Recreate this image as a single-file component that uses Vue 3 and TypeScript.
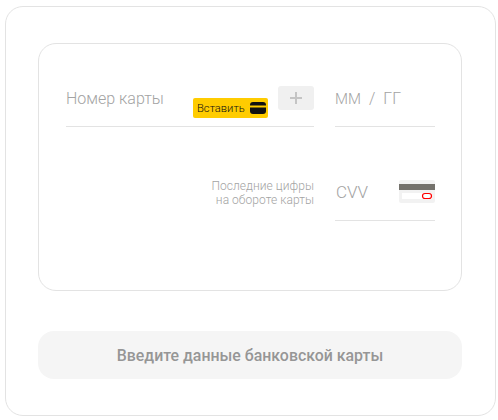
<template>
    <div class="wrapper">
        <div class="card-form">
            <div class="row">
                <div class="field number-field">
                    <span class="placeholder">Номер карты</span>
                    <button class="paste">
                        <span>Вставить</span>
                        <svg width="16" height="12" viewBox="0 0 16 12">
                            <rect x="0" y="0" width="16" height="12" rx="3" fill="#111" />
                            <rect x="0" y="3.5" width="16" height="2" fill="#ffcc00" />
                        </svg>
                    </button>
                    <div class="add">
                        <svg width="12" height="12" viewBox="0 0 12 12">
                            <path d="M6 0v12M0 6h12" stroke="#c4c4c4" stroke-width="2" fill="none" />
                        </svg>
                    </div>
                </div>
                <div class="field date-field">
                    <span class="placeholder month">ММ</span>
                    <span class="placeholder">/</span>
                    <span class="placeholder">ГГ</span>
                </div>
            </div>
            <div class="row second">
                <div class="hint">Последние цифры<br />на обороте карты</div>
                <div class="field cvv-field">
                    <span class="placeholder cvv">CVV</span>
                    <svg class="cvv-icon" width="36" height="23" viewBox="0 0 36 23">
                        <rect width="36" height="23" rx="2" fill="#f2f2f2" />
                        <rect y="4" width="36" height="6" fill="#74726c" />
                        <rect x="3" y="13" width="30" height="6" fill="#fff" />
                        <rect x="23.5" y="13.5" width="9" height="5" rx="2.5" fill="#fff" stroke="#f00" stroke-width="1.2" />
                    </svg>
                </div>
            </div>
        </div>
        <button class="submit">Введите данные банковской карты</button>
    </div>
</template>

<script setup lang="ts">
</script>

<style>
body {
    background: #fff;
}
</style>

<style scoped>
.wrapper {
    box-sizing: border-box;
    width: 491px;
    height: 410px;
    margin: 6px 0 0 5px;
    padding: 36px 33px 36px 32px;
    border: 1px solid #e3e3e3;
    border-radius: 18px;
    font-family: Roboto, sans-serif;
}

.card-form {
    box-sizing: border-box;
    height: 248px;
    padding: 0 26px 0 27px;
    border: 1px solid #e3e3e3;
    border-radius: 18px;
}

.row {
    display: flex;
    justify-content: space-between;
}

.field {
    display: flex;
    box-sizing: border-box;
    border-bottom: 1px solid #e3e3e3;
}

.number-field {
    position: relative;
    align-items: center;
    width: 248px;
    height: 83px;
    padding-top: 27px;
}

.date-field {
    align-items: center;
    width: 100px;
    height: 83px;
    padding-top: 27px;
    gap: 8px;
}

.placeholder {
    font-size: 16px;
    font-weight: 300;
    color: #a3a3a3;
    line-height: 20px;
}

.month {
    font-size: 15px;
}

.cvv {
    margin: -2px 0 0 1px;
    font-size: 17px;
}

.paste {
    position: absolute;
    left: 127px;
    top: 54px;
    display: flex;
    align-items: center;
    justify-content: space-between;
    box-sizing: border-box;
    width: 75px;
    height: 20px;
    padding: 0 2px 0 4px;
    border: 0;
    border-radius: 2px;
    background: #ffcc00;
    color: #111;
    font-family: Roboto, sans-serif;
    font-size: 11.2px;
    font-weight: 300;
}

.add {
    position: absolute;
    right: 0;
    top: 42px;
    display: flex;
    align-items: center;
    justify-content: center;
    width: 36px;
    height: 24px;
    border-radius: 3px;
    background: #f0f0f0;
}

.second {
    justify-content: flex-end;
    gap: 21px;
}

.hint {
    margin-top: 52px;
    text-align: right;
    font-size: 12px;
    font-weight: 300;
    letter-spacing: 0.05px;
    line-height: 14px;
    color: #a3a3a3;
}

.cvv-field {
    align-items: center;
    justify-content: space-between;
    width: 100px;
    height: 94px;
    padding-top: 38px;
}

.cvv-field .cvv-icon {
    margin-top: -2px;
}

.submit {
    display: block;
    width: 100%;
    height: 48px;
    margin-top: 40px;
    border: 0;
    border-radius: 16px;
    background: #f5f5f5;
    color: #969696;
    font-family: Roboto, sans-serif;
    font-size: 15.9px;
    font-weight: 500;
}
</style>
